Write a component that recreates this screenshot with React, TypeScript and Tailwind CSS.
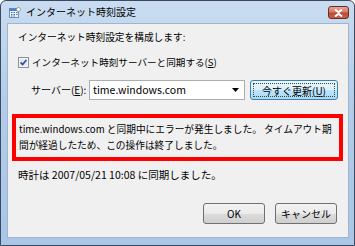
import React from "react";

const font = {
  fontFamily: '"Noto Sans CJK JP", "Noto Sans", sans-serif',
};

function ClockIcon() {
  return (
    <svg width="12" height="11" viewBox="0 0 12 11" className="mr-[5px]">
      <rect x="0.5" y="1.5" width="9" height="9" fill="#eef4fb" stroke="#6c8fb8" />
      <rect x="0.5" y="1.5" width="9" height="2.5" fill="#4f7fc0" />
      <path d="M2 5.5h1.5M4.5 5.5H6M7 5.5h1.5M2 7.5h1.5M4.5 7.5H6M7 7.5h1.5M2 9h1.5M4.5 9H6" stroke="#4a6fa5" />
      <circle cx="9.5" cy="2.5" r="2" fill="#fff" stroke="#8a8a8a" strokeWidth="0.8" />
    </svg>
  );
}

function Btn({ children, focused }: { children: React.ReactNode; focused?: boolean }) {
  return (
    <div
      className={
        focused
          ? "relative flex h-[20px] items-center justify-center rounded-[3px] border border-[#3c7fb1] bg-[linear-gradient(#eaf6fd_0%,#d9f0fc_50%,#bee6fd_51%,#a7d9f5_100%)] text-[10px] text-black"
          : "relative flex h-[21px] w-[62px] items-center justify-center rounded-[3px] border border-[#707070] bg-[linear-gradient(#f2f2f2_0%,#ebebeb_50%,#dddddd_51%,#cfcfcf_100%)] text-[10px] text-black"
      }
    >
      {focused && (
        <div className="absolute inset-[2px] border border-dotted border-[#444]" />
      )}
      {children}
    </div>
  );
}

export default function App() {
  return (
    <div
      style={font}
      className="flex h-[246px] w-[355px] flex-col rounded-t-[6px] border border-[#3a4a60] bg-[linear-gradient(180deg,#c9dcf1_0%,#b3cde9_40%,#a9c6e6_100%)]"
    >
      <div className="flex h-[22px] items-center pl-[8px] pr-[5px]">
        <ClockIcon />
        <span className="text-[10px] leading-none text-black">インターネット時刻設定</span>
        <div className="ml-auto mt-[1px] flex h-[13px] w-[21px] items-center justify-center rounded-[3px] border border-[#6b2a22] bg-[linear-gradient(#e6a597_0%,#d27767_45%,#bd4a37_55%,#c6614a_100%)]">
          <svg width="9" height="8" viewBox="0 0 9 8">
            <path d="M1 0.5L4.5 3.3L8 0.5M1 7.5L4.5 4.7L8 7.5" stroke="#fff" strokeWidth="2" fill="none" />
          </svg>
        </div>
      </div>
      <div className="mb-[7px] ml-[6px] flex w-[342px] flex-1 flex-col border border-[#9fb5cf] bg-[#f0f0f0] px-[4px] text-[10px] text-black">
        <div className="ml-[6px] mt-[6px] text-[9.7px] leading-[14px]">インターネット時刻設定を構成します:</div>
        <div className="ml-[6px] mt-[11px] flex items-center leading-[14px]">
          <svg width="11" height="11" viewBox="0 0 11 11" className="mr-[3px]">
            <rect x="0.5" y="0.5" width="10" height="10" fill="#f4f7fb" stroke="#8f8f8f" />
            <rect x="2" y="2" width="7" height="7" fill="#dfe8f3" />
            <path d="M2.6 5.4L4.6 7.6L8.4 3" stroke="#2f4f8f" strokeWidth="1.6" fill="none" />
          </svg>
          <span className="text-[9.6px]">
            インターネット時刻サーバーと同期する(<span className="underline">S</span>)
          </span>
        </div>
        <div className="mt-[11px] flex items-center">
          <span className="ml-[19px] w-[58px] leading-[14px]">
            サーバー(<span className="underline">E</span>):
          </span>
          <div className="flex h-[20px] w-[156px] items-center border border-[#abadb3] bg-white pl-[3px] pr-[5px]">
            <span className="text-[10.5px]">time.windows.com</span>
            <svg width="7" height="4" viewBox="0 0 7 4" className="ml-auto">
              <path d="M0 0h7L3.5 4z" fill="#000" />
            </svg>
          </div>
          <div className="ml-[5px] w-[88px]">
            <Btn focused>
              今すぐ更新(<span className="underline">U</span>)
            </Btn>
          </div>
        </div>
        <div className="mt-[14px] w-[331px] border-[4px] border-[#ff0000] pl-[3px] pr-0 pb-[4px] pt-[3px] text-[9.7px] leading-[16px]">
          <span className="whitespace-nowrap">
            time.windows.com と同期中にエラーが発生しました。 タイムアウト期
          </span>
          <br />
          間が経過したため、この操作は終了しました。
        </div>
        <div className="ml-[6px] mt-[7px] text-[10.5px] leading-[14px]">
          時計は 2007/05/21 10:08 に同期しました。
        </div>
        <div className="mt-auto mb-[13px] flex justify-end gap-[10px] pr-[7px]">
          <Btn>OK</Btn>
          <Btn>キャンセル</Btn>
        </div>
      </div>
    </div>
  );
}
